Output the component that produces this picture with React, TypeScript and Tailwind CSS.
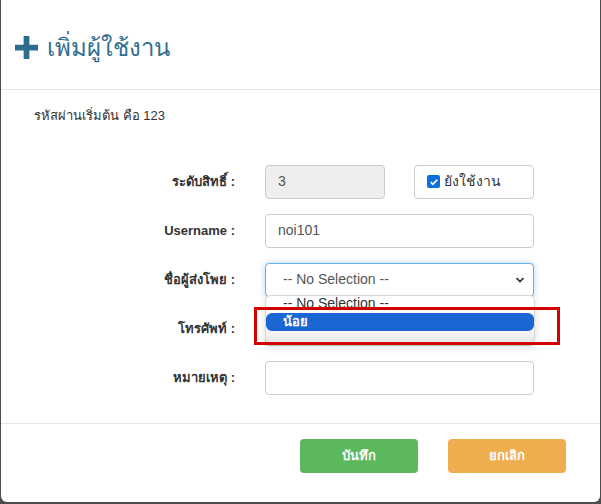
import React from "react";

const font = { fontFamily: '"Liberation Sans", "Noto Sans", Tahoma, sans-serif' };

function Row({ label, children }: { label: string; children: React.ReactNode }) {
  return (
    <div className="flex h-[34px] items-center">
      <div className="w-[235px] pr-[1px] text-right text-[13px] font-bold text-[#333]">{label}</div>
      <div className="ml-[29px] flex h-full items-center">{children}</div>
    </div>
  );
}

export default function App() {
  return (
    <div className="h-[504px] w-[601px] overflow-hidden bg-[#4d4d4d]" style={font}>
      <div className="relative ml-[1px] flex h-[502px] w-[599px] flex-col rounded-b-[6px] bg-white">
        {/* header */}
        <div className="flex h-[90px] items-center border-b border-[#e5e5e5] pl-[14px] pt-[6px]">
          <svg width="23" height="23" viewBox="0 0 24 24" className="mr-[9px]">
            <path d="M9 0h6v9h9v6h-9v9H9v-9H0V9h9z" fill="#2c6d8e" />
          </svg>
          <span className="text-[24px] text-[#31708f]">เพิ่มผู้ใช้งาน</span>
        </div>
        {/* body */}
        <div className="pl-[33px] pt-[16px] text-[13px] text-[#333]">รหัสผ่านเริ่มต้น คือ 123</div>
        <div className="mt-[39px] flex flex-col gap-[15px]">
          <Row label="ระดับสิทธิ์ :">
            <div className="flex h-[34px] w-[120px] items-center rounded-[4px] border border-[#ccc] bg-[#eee] pl-[12px] text-[14px] text-[#555]">
              3
            </div>
            <div className="ml-[29px] flex h-[34px] w-[120px] items-center rounded-[4px] border border-[#ccc] bg-white pl-[12px] text-[14px] text-[#333]">
              <span className="mr-[4px] flex h-[13px] w-[13px] items-center justify-center rounded-[2px] bg-[#0b6fdc]">
                <svg width="10" height="10" viewBox="0 0 10 10">
                  <path d="M1.8 5.2l2.1 2.1L8.3 2.6" stroke="white" strokeWidth="1.8" fill="none" />
                </svg>
              </span>
              ยังใช้งาน
            </div>
          </Row>
          <Row label="Username :">
            <div className="flex h-[34px] w-[269px] items-center rounded-[4px] border border-[#ccc] bg-white pl-[12px] text-[14px] text-[#555]">
              noi101
            </div>
          </Row>
          <Row label="ชื่อผู้ส่งโพย :">
            <div className="flex h-[34px] w-[269px] items-center justify-between rounded-[4px] border border-[#66afe9] bg-white pl-[17px] pr-[8px] text-[14px] text-[#555] shadow-[0_0_6px_rgba(102,175,233,0.5)]">
              -- No Selection --
              <svg width="10" height="8" viewBox="0 0 10 8">
                <path d="M1.5 2.2L5 5.6l3.5-3.4" stroke="#333" strokeWidth="1.7" fill="none" />
              </svg>
            </div>
          </Row>
          <Row label="โทรศัพท์ :">
            <div className="h-[34px] w-[269px] rounded-[4px] border border-[#ccc] bg-white" />
          </Row>
          <Row label="หมายเหตุ :">
            <div className="h-[34px] w-[269px] rounded-[4px] border border-[#ccc] bg-white" />
          </Row>
        </div>
        {/* footer */}
        <div className="mt-auto flex h-[79px] items-start border-t border-[#e5e5e5] pl-[299px] pt-[15px]">
          <button className="h-[34px] w-[118px] rounded-[4px] bg-[#5cb85c] text-[13px] font-bold text-white">บันทึก</button>
          <button className="ml-[30px] h-[34px] w-[118px] rounded-[4px] bg-[#f0ad4e] text-[13px] font-bold text-white">ยกเลิก</button>
        </div>

        {/* dropdown overlay */}
        <div className="absolute left-[264px] top-[295px] h-[49px] w-[270px] overflow-hidden rounded-[6px] border border-[#d6d6d6] bg-gradient-to-b from-white from-60% to-[#e6e6e6] shadow-[0_4px_8px_rgba(0,0,0,0.12)]">
          <div className="h-[17px] overflow-hidden pl-[17px] text-[14px] leading-[16px] text-[#333]">
            <div className="-mt-[1px]">-- No Selection --</div>
          </div>
          <div className="flex h-[18px] items-center rounded-[6px] bg-[#1a66d2] pl-[17px] text-[13px] font-bold text-white">น้อย</div>
        </div>
        {/* red highlight */}
        <div className="absolute left-[253px] top-[307px] h-[38px] w-[306px] border-[3px] border-[#d40000]" />
      </div>
    </div>
  );
}
